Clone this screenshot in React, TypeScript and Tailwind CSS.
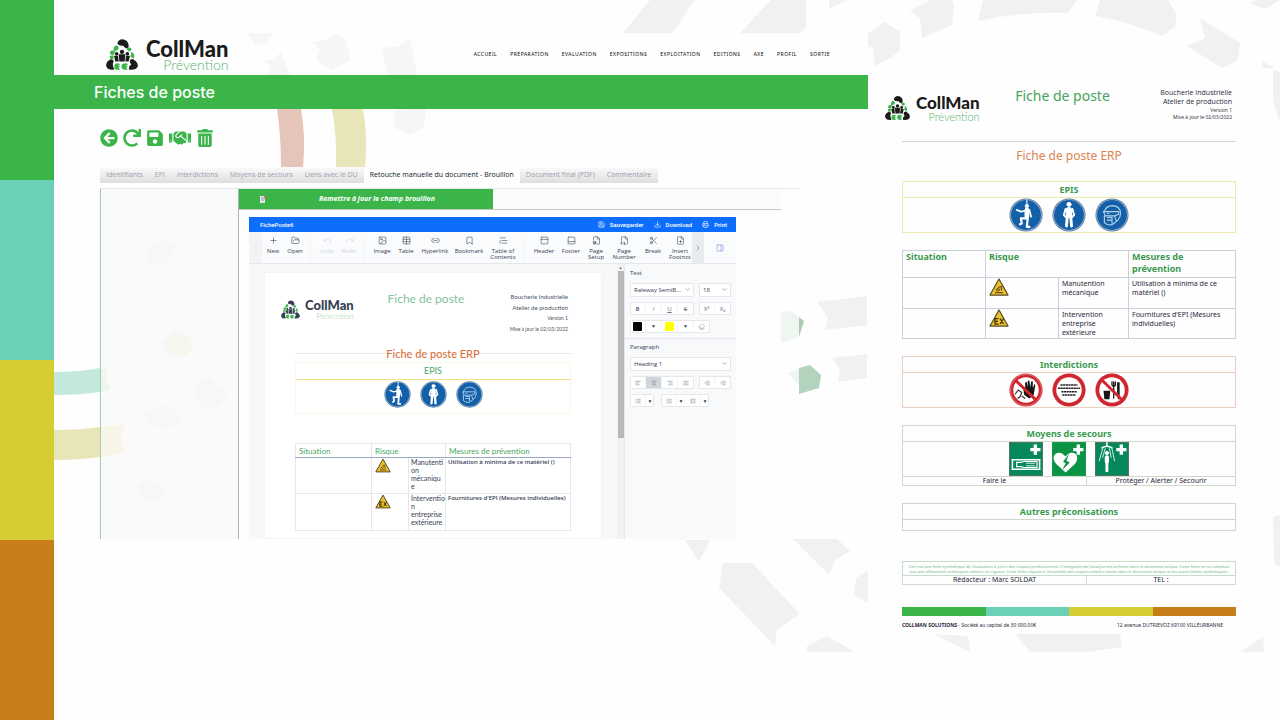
import type { ReactNode } from "react";
import {
  FaArrowCircleLeft,
  FaHandshake,
  FaRedo,
  FaSave,
  FaTrashAlt,
} from "react-icons/fa";
import {
  AlignCenter,
  AlignJustify,
  AlignLeft,
  AlignRight,
  Bookmark,
  ChevronDown,
  ChevronLeft,
  ChevronRight,
  Download,
  Eraser,
  FileCog,
  FileDigit,
  FilePlus,
  FolderOpen,
  Image as ImageIcon,
  IndentDecrease,
  IndentIncrease,
  Link2,
  List,
  ListOrdered,
  PanelBottom,
  PanelRight,
  PanelTop,
  Plus,
  Printer,
  Redo,
  Save,
  Scissors,
  Table,
  TextQuote,
  Undo,
  type LucideIcon,
} from "lucide-react";

const NAV = [
  "ACCUEIL",
  "PRÉPARATION",
  "EVALUATION",
  "EXPOSITIONS",
  "EXPLOITATION",
  "EDITIONS",
  "AXE",
  "PROFIL",
  "SORTIE",
];

const TABS = [
  "Identifiants",
  "EPI",
  "Interdictions",
  "Moyens de secours",
  "Liens avec le DU",
  "Retouche manuelle du document - Brouillon",
  "Document final (PDF)",
  "Commentaire",
];

const ACTIVE_TAB = 5;

type Tool = { label: string; icon: LucideIcon; width: string; off?: boolean };

const TOOL_GROUPS: Tool[][] = [
  [
    { label: "New", icon: Plus, width: "w-[22px]" },
    { label: "Open", icon: FolderOpen, width: "w-[22px]" },
  ],
  [
    { label: "Undo", icon: Undo, width: "w-[22px]", off: true },
    { label: "Redo", icon: Redo, width: "w-[22px]", off: true },
  ],
  [
    { label: "Image", icon: ImageIcon, width: "w-[24px]" },
    { label: "Table", icon: Table, width: "w-[24px]" },
    { label: "Hyperlink", icon: Link2, width: "w-[34px]" },
    { label: "Bookmark", icon: Bookmark, width: "w-[34px]" },
    { label: "Table of Contents", icon: TextQuote, width: "w-[34px]" },
  ],
  [
    { label: "Header", icon: PanelTop, width: "w-[28px]" },
    { label: "Footer", icon: PanelBottom, width: "w-[26px]" },
    { label: "Page Setup", icon: FileCog, width: "w-[24px]" },
    { label: "Page Number", icon: FileDigit, width: "w-[32px]" },
    { label: "Break", icon: Scissors, width: "w-[26px]" },
    { label: "Insert Footnot", icon: FilePlus, width: "w-[28px]" },
  ],
];

function Backdrop() {
  return (
    <svg
      className="absolute inset-0 h-full w-full"
      viewBox="0 0 1280 720"
      preserveAspectRatio="xMidYMid slice"
      aria-hidden="true"
    >
      <g fill="#f1f1f1">
        <path d="M650 0H695L672 33H623Z" />
        <path d="M771 0H806V27L800 33H740Z" />
        <path d="M829 0H847L829 9Z" />
        <path d="M868 33 885 22 900 32V50L892 57 875 66 873 46 868 48Z" />
        <path d="M910 11 930 0H952L954 7 952 25 922 38 920 18Z" />
        <path d="M983 0H1077L1068 13Q1022 11 978 21Z" />
        <path d="M1100 0H1168L1177 15 1175 27 1162 36Q1130 22 1095 16Z" />
        <path d="M1200 18 1240 43 1238 60 1222 68 1187 46 1205 38Z" />
        <path d="M1250 3 1256 0H1280L1265 9Z" />
        <path d="M1262 61 1275 68H1263Z" />
        <path d="M1273 70 1280 72V123L1273 100Z" />
        <path d="M817 302 867 296V325L825 330 828 318Z" />
        <path d="M832 358 867 354V378L838 382 840 370Z" />
        <path d="M685 540H710L699 562Z" />
        <path d="M723 563H752L800 614 777 630 775 646 719 588Z" />
        <path d="M793 539H837L850 551 835 560 829 575Z" />
        <path d="M868 570V603L854 595 856 578Z" />
        <path d="M807 646 827 636 855 652H807Z" />
        <path d="M933 634 968 636 970 652Z" />
        <path d="M1015 634H1120L1122 647 1087 652H1030Z" />
        <path d="M1240 652 1263 637 1264 652Z" />
        <path d="M1273 517 1280 515V567L1274 563Z" />
      </g>
      <g fill="#f6f6f6">
        <path d="M247 33H274L267 44 256 45Z" />
        <path d="M261 60 274 60 281 52 290 75H267L271 65Z" />
        <path d="M312 42 328 40 337 33 346 40 351 60 332 70 316 60 320 49Z" />
        <path d="M382 48 400 46 410 38 417 75H387Z" />
        <path d="M394 110 426 108 424 127 409 135 394 127Z" />
      </g>
      <path d="M277 109H301Q306 137 303 167H281Q281 135 277 109Z" fill="#e5c5b9" />
      <path d="M332 109H363Q368 137 365 167H336Q337 135 332 109Z" fill="#e8e5b8" />
      <path d="M54 372Q80 372 100 368V392Q80 395 54 395Z" fill="#c3e8dc" />
      <path d="M54 430Q80 430 100 427V457Q80 460 54 460Z" fill="#e8e5b8" />
      <path d="M781 312 792 311 799 317V337L781 343Z" fill="#eff5f1" />
      <path d="M799 317 804 321 799 337Z" fill="#a9cdb2" />
      <path d="M788 373 799 368V385Z" fill="#eff5f1" />
      <path d="M799 368 810 365 821 375 819 388 799 394Z" fill="#b4d3bd" />
    </svg>
  );
}

// faint shapes that show through the side column of the panel
function ColumnShapes() {
  return (
    <svg viewBox="0 0 137 350" className="h-[350px] w-full" aria-hidden="true">
      <path d="M0 238 25 236 19 248 24 264 0 268Z" fill="#f6f5e8" />
      <path d="M0 180 6 179 4 190 10 200 0 203Z" fill="#eef6f2" />
      <path d="M62 152 74 142 86 146 94 156 84 168 70 166 64 158Z" fill="#f7f7f0" />
      <g fill="#f7f7f7">
        <path d="M94 198 106 188 118 198 128 204 118 216 104 220 94 210Z" />
        <path d="M42 224 58 216 74 220 82 232 66 240 50 236Z" />
        <path d="M36 296 46 290 64 300 56 312 40 308Z" />
        <path d="M44 62 62 50 74 58 64 74 48 78Z" />
      </g>
    </svg>
  );
}

function LogoMark({ className }: { className: string }) {
  return (
    <svg viewBox="0 0 96 92" className={className} aria-hidden="true">
      <g fill="currentColor">
        <path d="M34 14Q36 0 50 0Q66 2 68 18Q69 28 60 27Q54 24 51 19Q42 22 34 14Z" />
        <path d="M14 60Q24 60 23 68Q17 74 25 91Q6 94 1 82Q-2 68 14 60Z" />
        <path d="M82 60Q98 70 95 83Q89 94 69 91Q67 80 76 76Q69 69 73 62Q78 59 82 60Z" />
        <circle cx="48" cy="38" r="6.500" />
        <path d="M38 45H58L56 67H40Z" />
        <circle cx="32" cy="44" r="5.500" />
        <circle cx="64" cy="44" r="5.500" />
        <path d="M24 50H36L38 67H28Z" />
        <path d="M72 50H60L58 67H68Z" />
      </g>
      <g fill="#3bb54a">
        <path d="M30 18Q40 20 37 30L26 38Q18 26 30 18Z" />
        <path d="M12 38Q21 30 27 38L22 48Q10 48 12 38Z" />
        <path d="M61 29Q74 20 77 32L69 38Z" />
        <path d="M75 38Q88 42 84 58L73 53Q78 46 75 38Z" />
        <path d="M11 50 23 49 22 60 12 59Z" />
        <path d="M26 75Q35 69 43 75L37 79 43 82 37 85 43 90Q30 95 25 87Z" />
        <path d="M48 75Q58 69 67 75L60 79 66 82 60 85 66 90Q51 95 46 85Z" />
      </g>
    </svg>
  );
}

function Picto({ kind, className }: { kind: string; className: string }) {
  return (
    <svg viewBox="0 0 40 40" className={className} role="img" aria-label={kind}>
      {["harness", "clothing", "mask"].includes(kind) && (
        <>
          <circle cx="20" cy="20" r="19.500" fill="#5f84a8" />
          <circle cx="20" cy="20" r="18.300" fill="#a9bfd3" />
          <circle cx="20" cy="20" r="17.600" fill="#1460a8" />
        </>
      )}
      {kind === "harness" && (
        <g fill="none" stroke="#fff" strokeLinecap="round" strokeLinejoin="round">
          <path d="M21 2V9" strokeWidth="1.200" />
          <circle cx="21" cy="9.500" r="2" fill="#fff" />
          <path d="M21 14 21 22" strokeWidth="5.500" />
          <path d="M19 15 14 16 9 14M24 14 26 22" strokeWidth="2" />
          <path d="M20 24 14 24 15 30 13 31M22 24 21 34H24" strokeWidth="2.600" />
        </g>
      )}
      {kind === "clothing" && (
        <g fill="none" stroke="#fff" strokeLinecap="round" strokeLinejoin="round">
          <circle cx="20" cy="7.500" r="2.500" fill="#fff" />
          <path d="M20 14V20" strokeWidth="7" />
          <path d="M16 13 14 20 17 23M24 13 26 20 23 23" strokeWidth="2.400" />
          <path d="M18 22 17 33M22 22 23 33" strokeWidth="3.400" />
        </g>
      )}
      {kind === "mask" && (
        <g fill="none" stroke="#b9d2ea" strokeWidth="1.300">
          <path d="M11 16Q13 9 21 9Q30 10 30 18Q30 23 27 26" />
          <path d="M10 16H28V19L23 21H12L10 16ZM11 21V29Q17 34 22 30L27 26" />
          <path d="M14 23H20V30M14 26H20M23 21 25 27M14 18H17" />
        </g>
      )}
      {["entry", "notice", "food"].includes(kind) && (
        <>
          <circle cx="20" cy="20" r="19.500" fill="#cf2630" />
          <circle cx="20" cy="20" r="15" fill="#fff" />
        </>
      )}
      {kind === "entry" && (
        <>
          <circle cx="20" cy="20" r="18.500" fill="none" stroke="#f1b4b7" strokeWidth="0.600" />
          <path
            d="M18 26 17 20 19 20V11L21 11 22 17 22 9H24L25 17 26 10H28V18L30 13 31 14 29 26 24 30Z"
            fill="#161616"
          />
          <path d="M7 25 11 20 15 23 13 28 10 30M15 27 19 30" fill="none" stroke="#333" strokeWidth="1.400" />
          <path d="M8 9 31 31" stroke="#d2242c" strokeWidth="3.400" />
        </>
      )}
      {kind === "notice" && (
        <g stroke="#222" strokeWidth="1.800" strokeDasharray="2.6 0.5">
          <path d="M10 14H30M7 18H33M11 22H29M12 26H28" />
        </g>
      )}
      {kind === "food" && (
        <>
          <path d="M10 21H18L17 31H11ZM26 11H29V31H27L26 22Z" fill="#161616" />
          <path d="M20 10V15M22 10V30M24 10V15M20 15H24" stroke="#161616" strokeWidth="1.500" fill="none" />
          <path d="M9 9 31 31" stroke="#d2242c" strokeWidth="3.400" />
        </>
      )}
      {["stretcher", "defibrillator", "shower"].includes(kind) && (
        <>
          <rect
            x="0.500"
            y="0.500"
            width="39"
            height="39"
            fill={kind === "defibrillator" ? "#0a9344" : "#07885a"}
            stroke={kind === "defibrillator" ? "#0a9344" : "#4e6b5d"}
          />
          <path d="M29 3H33V7H37V11H33V15H29V11H25V7H29Z" fill="#fff" />
        </>
      )}
      {kind === "stretcher" && (
        <g fill="none" stroke="#fff">
          <path d="M3 21H37M3 32H37M4 20V33M36 20V33" strokeWidth="1.800" />
          <path d="M9 24H14L18 23H33V30H18L14 29H9Z" strokeWidth="1.300" />
          <path d="M20 25H31M20 28H31" strokeWidth="1" />
        </g>
      )}
      {kind === "defibrillator" && (
        <>
          <path d="M16 17Q10 10 4 14Q-1 19 5 26L16 36 27 26Q32 19 28 14Q21 10 16 17Z" fill="#fff" />
          <path d="M20 14 13 23 16 25 12 33 21 24 17 22Z" fill="#0a9344" />
        </>
      )}
      {kind === "shower" && (
        <g fill="none" stroke="#fff" strokeLinecap="round">
          <path d="M14 1V5M8 7Q14 3 20 7" strokeWidth="1.800" />
          <path d="M9 8 5 22M12 8 9 18M17 8 19 18M20 8 23 22" strokeWidth="1" strokeDasharray="3 1" />
          <circle cx="14" cy="13" r="2" fill="#fff" />
          <path d="M14 18V23" strokeWidth="5" />
          <path d="M14 24V34" strokeWidth="3.400" />
        </g>
      )}
    </svg>
  );
}

function Warning({ kind, className }: { kind: "crush" | "ex"; className: string }) {
  return (
    <svg viewBox="0 0 40 36" className={className} role="img" aria-label={kind}>
      <path d="M20 2 38 34H2Z" fill="#ecc22f" stroke="#5a4d24" strokeWidth="2.500" strokeLinejoin="round" />
      {kind === "ex" ? (
        <path
          d="M19 19H12V30H19M12 24.500H18M22 19 29 30M29 19 22 30"
          stroke="#3b2d0c"
          strokeWidth="2.500"
          fill="none"
        />
      ) : (
        <path d="M12 29H28M14 25 20 18 25 17V25M17 27 22 22" stroke="#6b541a" strokeWidth="2.500" fill="none" />
      )}
    </svg>
  );
}

function Pictos({ kinds, size }: { kinds: string[]; size: string }) {
  return (
    <div className="flex justify-center gap-[9px]">
      {kinds.map((k) => (
        <Picto key={k} kind={k} className={size} />
      ))}
    </div>
  );
}

function ToolButton({ tool }: { tool: Tool }) {
  const Icon = tool.icon;
  return (
    <button
      className={`flex shrink-0 flex-col items-center gap-[3px] text-center text-[6px] leading-[6px] ${tool.width} ${tool.off ? "text-gray-300" : "text-gray-700"}`}
    >
      <Icon size={9} strokeWidth={1.5} />
      <span>{tool.label}</span>
    </button>
  );
}

function Toolbar() {
  return (
    <div className="flex h-[32px] border-b border-gray-200 bg-[#fafbfc] font-['Open_Sans',sans-serif]">
      <button aria-label="Précédent" className="flex w-[13px] items-center justify-center bg-[#f1f3f5] text-gray-300">
        <ChevronLeft size={7} />
      </button>
      <div className="flex min-w-0 flex-1 overflow-hidden pt-[4px]">
        {TOOL_GROUPS.map((group, i) => (
          <div
            key={i}
            className={`flex shrink-0 items-start ${i > 0 ? "ml-[4px] border-l border-gray-100 pl-[5px]" : ""}`}
          >
            {group.map((tool) => (
              <ToolButton key={tool.label} tool={tool} />
            ))}
          </div>
        ))}
      </div>
      <button aria-label="Suivant" className="flex w-[12px] items-center justify-center bg-[#e9ecef] text-gray-500">
        <ChevronRight size={8} />
      </button>
      <button aria-label="Propriétés" className="flex w-[32px] items-center justify-center text-[#5b7fd0]">
        <PanelRight size={8} strokeWidth={1.5} />
      </button>
    </div>
  );
}

function SmallGroup({ children }: { children: ReactNode }) {
  return (
    <div className="flex h-[13px] rounded-[1px] bg-white text-gray-500 outline -outline-offset-1 outline-gray-200">
      {children}
    </div>
  );
}

function SmallButton({ label, on, children }: { label: string; on?: boolean; children: ReactNode }) {
  return (
    <button
      aria-label={label}
      className={`flex w-[16px] items-center justify-center border-r border-gray-100 leading-none ${on ? "bg-gray-300" : ""}`}
    >
      {children}
    </button>
  );
}

function Picker({ label, value, className }: { label: string; value: string; className: string }) {
  return (
    <div className={`relative h-[14px] rounded-[1px] border border-gray-200 bg-white ${className}`}>
      <select
        aria-label={label}
        className="block h-full w-full appearance-none bg-transparent pr-[10px] pl-[3px] text-[6px] leading-[12px] text-gray-700"
      >
        <option>{value}</option>
      </select>
      <ChevronDown size={7} className="pointer-events-none absolute top-[2px] right-[2px] text-gray-500" />
    </div>
  );
}

const Caret = () => <span className="text-[5px] text-gray-700">▼</span>;

function Properties() {
  return (
    <div className="w-[112px] border-l border-gray-200 bg-[#f8f9fb] font-['Open_Sans',sans-serif] text-[6px] leading-[10px] text-gray-700">
      <section className="flex flex-col items-start gap-[5px] px-[5px] pt-[4px] pb-[5px]">
        <h3>Text</h3>
        <div className="flex gap-[5px]">
          <Picker label="Police" value="Raleway SemiB..." className="w-[64px]" />
          <Picker label="Taille" value="18" className="w-[32px]" />
        </div>
        <div className="flex gap-[5px]">
          <SmallGroup>
            <SmallButton label="Gras"><b>B</b></SmallButton>
            <SmallButton label="Italique"><i>I</i></SmallButton>
            <SmallButton label="Souligné"><u>U</u></SmallButton>
            <SmallButton label="Barré"><s>S</s></SmallButton>
          </SmallGroup>
          <SmallGroup>
            <SmallButton label="Exposant">X²</SmallButton>
            <SmallButton label="Indice">X₂</SmallButton>
          </SmallGroup>
        </div>
        <SmallGroup>
          <SmallButton label="Couleur du texte"><span className="h-[9px] w-[9px] rounded-[1px] bg-black" /></SmallButton>
          <SmallButton label="Choisir la couleur"><Caret /></SmallButton>
          <SmallButton label="Surlignage"><span className="h-[9px] w-[9px] rounded-[1px] bg-[#ffff00]" /></SmallButton>
          <SmallButton label="Choisir le surlignage"><Caret /></SmallButton>
          <SmallButton label="Effacer"><Eraser size={7} strokeWidth={1.5} /></SmallButton>
        </SmallGroup>
      </section>
      <section className="flex flex-col items-start gap-[5px] border-t border-gray-200 px-[5px] pt-[3px]">
        <h3>Paragraph</h3>
        <Picker label="Style" value="Heading 1" className="w-[101px]" />
        <div className="flex gap-[5px]">
          <SmallGroup>
            <SmallButton label="Gauche"><AlignLeft size={6} /></SmallButton>
            <SmallButton label="Centre" on><AlignCenter size={6} /></SmallButton>
            <SmallButton label="Droite"><AlignRight size={6} /></SmallButton>
            <SmallButton label="Justifié"><AlignJustify size={6} /></SmallButton>
          </SmallGroup>
          <SmallGroup>
            <SmallButton label="Retrait -"><IndentDecrease size={6} /></SmallButton>
            <SmallButton label="Retrait +"><IndentIncrease size={6} /></SmallButton>
          </SmallGroup>
        </div>
        <div className="flex gap-[7px]">
          <SmallGroup>
            <SmallButton label="Interligne"><List size={6} /></SmallButton>
            <button aria-label="Choisir l'interligne" className="w-[8px] leading-none"><Caret /></button>
          </SmallGroup>
          <SmallGroup>
            <SmallButton label="Puces"><List size={6} /></SmallButton>
            <button aria-label="Choisir les puces" className="w-[8px] leading-none"><Caret /></button>
            <SmallButton label="Numéros"><ListOrdered size={6} /></SmallButton>
            <button aria-label="Choisir les numéros" className="w-[8px] leading-none"><Caret /></button>
          </SmallGroup>
        </div>
      </section>
    </div>
  );
}

function DraftPage() {
  return (
    <div className="ml-[15px] w-[338px] border border-gray-100 bg-white px-[30px] pt-[18px] font-['Lato',sans-serif]">
      <div className="-ml-[14px] grid h-[54px] grid-cols-[1fr_auto_1fr]">
        <div className="mt-[6px] flex h-[24px] items-center gap-[5px] text-gray-700">
          <LogoMark className="h-[19px] w-[19px]" />
          <div className="text-right">
            <div className="text-[13px] leading-[14px] font-black">CollMan</div>
            <div className="text-[8px] leading-[9px] font-light text-[#8fd0a0]">Prévention</div>
          </div>
        </div>
        <h2 className="text-[12px] leading-[16px] text-[#85c39a]">Fiche de poste</h2>
        <div className="mr-[3px] text-right text-[6px] leading-[11px] text-gray-600">
          <p>Boucherie Industrielle</p>
          <p>Atelier de production</p>
          <p className="text-[5px]">Version 1</p>
          <p className="text-[5px]">Mise à jour le 02/03/2022</p>
        </div>
      </div>
      <h2 className="flex items-center text-[11px] leading-[17px] font-medium whitespace-nowrap text-[#d9713c]">
        <span className="h-px flex-1 bg-gray-200" />
        Fiche de poste ERP
        <span className="h-px flex-1 bg-gray-200" />
      </h2>
      <table className="w-full border-collapse border border-[#faf8e6] text-center">
        <thead>
          <tr>
            <th className="h-[17px] border-b border-b-[#f0e28a] p-0 text-[9px] font-normal text-[#4da765]">EPIS</th>
          </tr>
        </thead>
        <tbody>
          <tr>
            <td className="h-[34px] p-0 pt-[1px] align-top">
              <Pictos kinds={["harness", "clothing", "mask"]} size="h-[27px] w-[27px]" />
            </td>
          </tr>
        </tbody>
      </table>
      <table className="mt-[29px] w-full table-fixed border-collapse text-left text-[7px] leading-[8px] text-gray-700">
        <colgroup>
          <col className="w-[76px]" />
          <col className="w-[37px]" />
          <col className="w-[37px]" />
          <col />
        </colgroup>
        <thead className="text-[8px] text-[#4da765]">
          <tr className="h-[14px]">
            <th className="border border-gray-200 border-b-[#98a8c2] px-[3px] py-0 font-normal">Situation</th>
            <th colSpan={2} className="border border-gray-200 border-b-[#98a8c2] px-[3px] py-0 font-normal">Risque</th>
            <th className="border border-gray-200 border-b-[#98a8c2] px-[3px] py-0 font-normal">Mesures de prévention</th>
          </tr>
        </thead>
        <tbody>
          <tr className="h-[36px] align-top">
            <td className="border border-gray-200" />
            <td className="border border-gray-200 px-[3px] py-0"><Warning kind="crush" className="h-[15px] w-[16px]" /></td>
            <td className="border border-gray-200 px-[2px] py-0">Manutenti<br />on<br />mécaniqu<br />e</td>
            <td className="border border-gray-200 px-[2px] py-0 font-['Open_Sans',sans-serif] text-[6px] font-semibold">Utilisation à minima de ce matériel ()</td>
          </tr>
          <tr className="h-[37px] align-top">
            <td className="border border-gray-200 border-t-[#c3c9d8]" />
            <td className="border border-gray-200 border-t-[#c3c9d8] px-[3px] py-0"><Warning kind="ex" className="h-[15px] w-[16px]" /></td>
            <td className="border border-gray-200 border-t-[#c3c9d8] px-[2px] py-0">Interventio<br />n<br />entreprise<br />extérieure</td>
            <td className="border border-gray-200 border-t-[#c3c9d8] px-[2px] py-0 font-['Open_Sans',sans-serif] text-[6px] font-semibold whitespace-nowrap">Fournitures d'EPI (Mesures individuelles)</td>
          </tr>
        </tbody>
      </table>
      <div className="h-[7px]" />
    </div>
  );
}

function Editor() {
  return (
    <div className="w-[487px] bg-[#f7f8f8]">
      <div className="flex h-[15px] items-center justify-between bg-[#0d6efd] pr-[9px] pl-[11px] font-['Roboto',sans-serif] text-[6px] leading-[10px] font-medium text-white">
        <span>FichePoste6</span>
        <div className="flex gap-[10px]">
          <button className="flex items-center gap-[5px]"><Save size={7} />Sauvegarder</button>
          <button className="flex items-center gap-[5px]"><Download size={7} />Download</button>
          <button className="flex items-center gap-[5px]"><Printer size={7} />Print</button>
        </div>
      </div>
      <Toolbar />
      <div className="flex">
        <div className="flex-1 pt-[8px]">
          <DraftPage />
        </div>
        <div className="flex w-[7px] flex-col items-center bg-[#f1f1f1]">
          <span className="text-[4px] leading-[7px] text-gray-500">▲</span>
          <div className="h-[167px] w-[6px] bg-[#b9b9b9]" />
        </div>
        <Properties />
      </div>
    </div>
  );
}

function Sheet({ title, line, children }: { title: string; line: string; children: ReactNode }) {
  return (
    <table className={`w-full table-fixed border-collapse border text-center text-[7px] leading-[8px] text-gray-800 ${line}`}>
      <colgroup>
        <col className="w-[184px]" />
        <col />
      </colgroup>
      <thead className="border-inherit">
        <tr className="border-inherit">
          <th colSpan={2} className="h-[16px] border-b border-inherit p-0 text-[9px] leading-[12px] text-[#3a9a50]">
            {title}
          </th>
        </tr>
      </thead>
      <tbody className="border-inherit">{children}</tbody>
    </table>
  );
}

function FinalSheet() {
  return (
    <aside className="relative w-[412px] shrink-0 pt-[68px] font-['Noto_Sans',sans-serif]">
      <header className="grid h-[73px] grid-cols-[1fr_auto_1fr] pt-[20px] pr-[40px] pl-[17px]">
        <div className="mt-[5px] flex h-[30px] items-center gap-[6px] text-[#1b1b1b]">
          <LogoMark className="h-[24px] w-[25px]" />
          <div className="text-right font-['Lato',sans-serif]">
            <div className="text-[17px] leading-[17px] font-black">CollMan</div>
            <div className="text-[11px] leading-[12px] font-light text-[#55b56c]">Prévention</div>
          </div>
        </div>
        <h2 className="text-[14px] leading-[16px] text-[#45a35b]">Fiche de poste</h2>
        <div className="pr-[8px] text-right font-['Open_Sans',sans-serif] text-[7px] leading-[9px] text-gray-800">
          <p>Boucherie Industrielle</p>
          <p>Atelier de production</p>
          <p className="text-[5px] leading-[8px]">Version 1</p>
          <p className="text-[5px] leading-[7px]">Mise à jour le 02/03/2022</p>
        </div>
      </header>
      <div className="pr-[44px] pl-[34px]">
        <h2 className="mb-[10px] h-[30px] border-t border-gray-300 pt-[4px] text-center text-[12px] leading-[19px] text-[#dc8350]">
          Fiche de poste ERP
        </h2>
        <div className="flex flex-col gap-[17px]">
          <Sheet title="EPIS" line="border-[#eee9ae]">
            <tr>
              <td colSpan={2} className="h-[34px] p-0">
                <Pictos kinds={["harness", "clothing", "mask"]} size="h-[34px] w-[34px]" />
              </td>
            </tr>
          </Sheet>
          <table className="w-full table-fixed border-collapse text-left text-[7px] leading-[9px] text-gray-800">
            <colgroup>
              <col className="w-[83px]" />
              <col className="w-[73px]" />
              <col className="w-[70px]" />
              <col />
            </colgroup>
            <thead className="text-[9px] leading-[12px] text-[#3a9a50]">
              <tr className="h-[27px] align-top">
                <th className="border border-[#c9d0dc] px-[3px] py-0">Situation</th>
                <th colSpan={2} className="border border-[#c9d0dc] px-[3px] py-0">Risque</th>
                <th className="border border-[#c9d0dc] px-[3px] py-0">Mesures de<br />prévention</th>
              </tr>
            </thead>
            <tbody>
              <tr className="h-[31px] align-top">
                <td className="border border-[#c9d0dc]" />
                <td className="border border-[#c9d0dc] px-[3px] py-0"><Warning kind="crush" className="h-[18px] w-[20px]" /></td>
                <td className="border border-[#c9d0dc] px-[3px] py-[1px]">Manutention mécanique</td>
                <td className="border border-[#c9d0dc] px-[3px] py-[1px]">Utilisation à minima de ce matériel ()</td>
              </tr>
              <tr className="h-[30px] align-top">
                <td className="border border-[#c9d0dc]" />
                <td className="border border-[#c9d0dc] px-[3px] py-0"><Warning kind="ex" className="h-[18px] w-[20px]" /></td>
                <td className="border border-[#c9d0dc] px-[3px] py-[1px]">Intervention entreprise extérieure</td>
                <td className="border border-[#c9d0dc] px-[3px] py-[1px]">Fournitures d'EPI (Mesures individuelles)</td>
              </tr>
            </tbody>
          </table>
          <Sheet title="Interdictions" line="border-[#e8cfc4]">
            <tr>
              <td colSpan={2} className="h-[34px] p-0">
                <Pictos kinds={["entry", "notice", "food"]} size="h-[34px] w-[34px]" />
              </td>
            </tr>
          </Sheet>
          <Sheet title="Moyens de secours" line="border-[#cfd9cb]">
            <tr>
              <td colSpan={2} className="h-[34px] p-0">
                <Pictos kinds={["stretcher", "defibrillator", "shower"]} size="h-[34px] w-[34px]" />
              </td>
            </tr>
            <tr className="border-inherit">
              <td className="border border-inherit p-0">Faire le</td>
              <td className="border border-inherit p-0">Protéger / Alerter / Secourir</td>
            </tr>
          </Sheet>
          <Sheet title="Autres préconisations" line="border-[#cfd6cf]">
            <tr>
              <td colSpan={2} className="h-[11px] p-0" />
            </tr>
          </Sheet>
        </div>
        <table className="mt-[30px] w-full table-fixed border-collapse text-center text-[7px] leading-[8px] text-gray-800">
          <colgroup>
            <col className="w-[184px]" />
            <col />
          </colgroup>
          <tbody>
            <tr>
              <td colSpan={2} className="h-[14px] border border-[#c7dccb] p-0 text-[4px] leading-[5px] whitespace-nowrap text-[#6fb583]">
                Ceci est une fiche synthétique de l'évaluation à priori des risques professionnels. L'intégralité de l'analyse est archivée dans le document unique. Cette fiche ne se substitue
                <br />
                pas aux référentiels techniques métiers en vigueur. Cette fiche s'ajoute à l'ensemble des risques métiers traités dans le document unique et les autres fiches synthétiques.
              </td>
            </tr>
            <tr>
              <td className="border border-[#d5d9cf] p-0">Rédacteur : Marc SOLDAT</td>
              <td className="border border-[#d5d9cf] p-0">TEL :</td>
            </tr>
          </tbody>
        </table>
        <div className="mt-[22px] grid h-[9px] grid-cols-4">
          <span className="bg-[#3bb54a]" />
          <span className="bg-[#6ccfb7]" />
          <span className="bg-[#d6cc33]" />
          <span className="bg-[#c87d1b]" />
        </div>
        <footer className="mt-[4px] flex justify-between pr-[13px] text-[5px] leading-[10px] text-gray-800">
          <span><b>COLLMAN SOLUTIONS</b> - Société au capital de 30 000.00€</span>
          <span>12 avenue DUTRIEVOZ 69100 VILLEURBANNE</span>
        </footer>
      </div>
    </aside>
  );
}

export default function App() {
  return (
    <div className="relative flex min-h-screen overflow-hidden bg-[#fefefe] font-['Open_Sans',sans-serif]">
      <Backdrop />
      <div className="relative flex w-[54px] shrink-0 flex-col">
        <span className="flex-1 bg-[#3bb54a]" />
        <span className="flex-1 bg-[#6ccfb7]" />
        <span className="flex-1 bg-[#d6cc33]" />
        <span className="flex-1 bg-[#c87d1b]" />
      </div>

      <main className="relative min-w-0 flex-1 pt-[33px]">
        <header className="flex h-[42px] items-center justify-between pr-[38px] pl-[52px]">
          <div className="flex items-center gap-[8px] text-[#1b1b1b]">
            <LogoMark className="h-[31px] w-[32px]" />
            <div className="pt-[4px] text-right font-['Lato',sans-serif]">
              <div className="text-[22px] leading-[18px] font-black">CollMan</div>
              <div className="text-[14px] leading-[14px] font-light text-[#55b56c]">Prévention</div>
            </div>
          </div>
          <nav className="flex gap-[13px] font-['Noto_Sans',sans-serif] text-[5px] leading-[8px] tracking-widest text-black">
            {NAV.map((item) => (
              <a key={item} href="#">{item}</a>
            ))}
          </nav>
        </header>

        <div className="flex h-[34px] items-center bg-[#3bb54a] pl-[40px]">
          <h1 className="font-['Inter',sans-serif] text-[16px] leading-[24px] font-medium text-white">Fiches de poste</h1>
        </div>

        <div className="flex h-[58px] items-center gap-[5px] pl-[46px] text-[#3bb54a]">
          <button aria-label="Retour"><FaArrowCircleLeft size={18} /></button>
          <button aria-label="Recharger"><FaRedo size={18} /></button>
          <button aria-label="Enregistrer"><FaSave size={18} /></button>
          <button aria-label="Valider"><FaHandshake size={22} /></button>
          <button aria-label="Supprimer"><FaTrashAlt size={18} /></button>
        </div>

        <div className="mr-[68px] ml-[46px]">
          <div role="tablist" className="flex h-[21px] items-start text-[7px] leading-[16px]">
            {TABS.map((tab, i) => (
              <button
                key={tab}
                role="tab"
                aria-selected={i === ACTIVE_TAB}
                className={`px-[6px] whitespace-nowrap ${i === ACTIVE_TAB ? "text-gray-900" : "bg-linear-to-b from-[#fbfbfb] to-[#dedede] text-gray-400"}`}
              >
                {tab}
              </button>
            ))}
          </div>
          <div className="flex border-t border-l border-t-gray-200 border-l-[#9ccfa6]">
            <div className="w-[137px] bg-[#fafafa]">
              <ColumnShapes />
            </div>
            <div className="min-w-0 flex-1 border-l border-[#a9b5ab]">
              <div className="mr-[19px] border-b border-[#c3c9c0] bg-[#fcfcfc]">
                <button className="flex h-[20px] w-[254px] items-center bg-[#3bb54a] pl-[20px] text-[7px] font-bold text-white italic">
                  <svg viewBox="0 0 8 8" className="h-[8px] w-[8px]" aria-hidden="true">
                    <path d="M1 1H5L6 3V8H1Z" fill="#dfe5e8" />
                    <path d="M2 3H5M2 5H5" stroke="#8a93a0" strokeWidth="0.800" />
                    <path d="M5 3 7 0 8 1 6 4Z" fill="#d9654a" />
                  </svg>
                  <span className="flex-1 pr-[6px] text-center">Remettre à jour le champ brouillon</span>
                </button>
              </div>
              <div className="pt-[7px] pl-[10px]">
                <Editor />
              </div>
            </div>
          </div>
        </div>
      </main>

      <FinalSheet />
    </div>
  );
}
